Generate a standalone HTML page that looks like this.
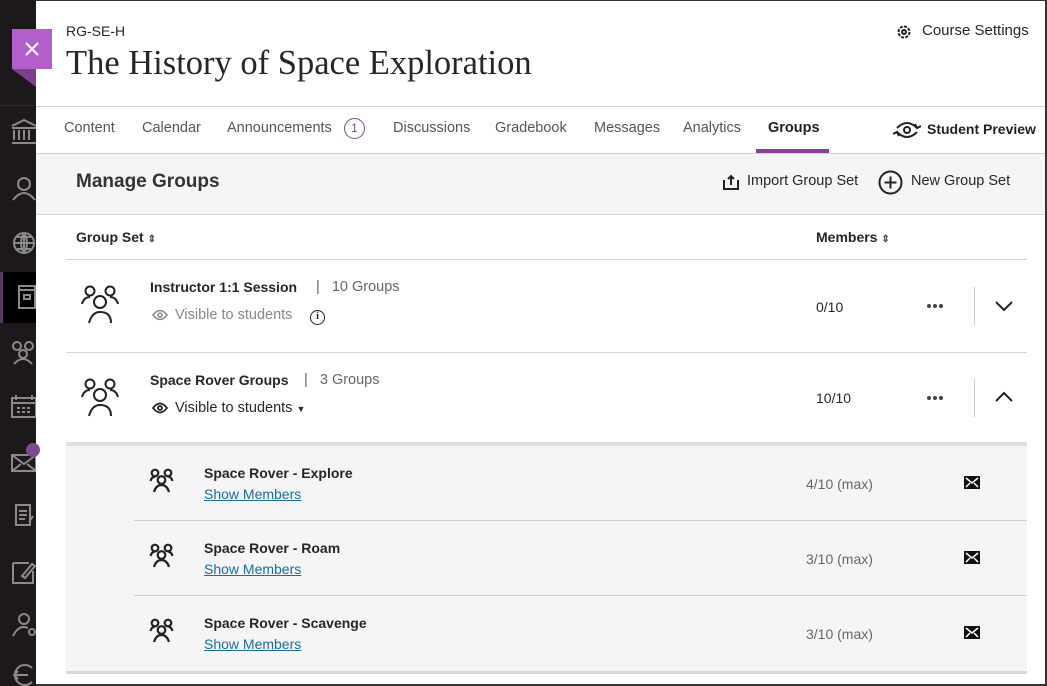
<!DOCTYPE html>
<html><head><meta charset="utf-8"><style>
*{box-sizing:border-box;margin:0;padding:0}
body{width:1047px;height:686px;overflow:hidden;position:relative;background:#fff;font-family:"Liberation Sans",sans-serif;color:#262626}
.a{position:absolute}
.side{left:0;top:0;width:36px;height:686px;background:#1c181c}
.t{font-size:14.5px;color:#555;top:120px}
.b{font-weight:bold}
.gray{color:#666}
.link{color:#1a6e99;text-decoration:underline;font-size:14px}
</style></head><body>
<div class="a side">
 <div class="a" style="left:0;top:105px;width:36px;height:1px;background:#2e2a2e"></div>
 <div class="a" style="left:0;top:272px;width:36px;height:51px;background:#000"></div>
 <div class="a" style="left:0;top:272px;width:3px;height:51px;background:#5b3468"></div>
 <svg class="a" style="left:0;top:0" width="36" height="686" fill="none" stroke="#8a8a8a" stroke-width="2">
  <path d="M12 126 L24 120 L36 126 M12 128h24 M14 130v10 M19 130v10 M24 130v10 M29 130v10 M12 143h24"/>
  <circle cx="24" cy="184" r="6"/><path d="M13 200 q11-14 22 0"/>
  <circle cx="24" cy="243" r="10"/><path d="M14 243h20 M24 233v20 M17 237h14 M17 249h14 M24 233q-6 10 0 20 M24 233q6 10 0 20"/>
  <rect x="19" y="286" width="16" height="22"/><path d="M19 290h16"/><rect x="24" y="295" width="6" height="4"/>
  <circle cx="17" cy="346" r="4"/><circle cx="29" cy="346" r="4"/><circle cx="23" cy="354" r="4"/><path d="M14 364q9-10 18 0"/>
  <rect x="12" y="398" width="24" height="19"/><path d="M12 403h24 M16 395v5 M32 395v5 M17 408h3 M22 408h3 M27 408h3 M17 412h3 M22 412h3 M27 412h3"/>
  <rect x="12" y="455" width="24" height="16"/><path d="M12 455l12 9 12-9 M12 471l9-7 M36 471l-9-7"/>
  <path d="M16 505h14v20h-14z M19 511h8 M19 515h8 M19 519h6 M29 522l4-6"/>
  <path d="M13 563h16 M13 563v20h20v-12 M22 576l10-12 3 2-10 12z"/>
  <circle cx="24" cy="619" r="5"/><path d="M13 636q6-12 15-8"/><circle cx="32" cy="632" r="3"/>
  <path d="M32 668a10 10 0 1 0 0 14 M14 675h14 M18 671l-4 4 4 4"/>
 </svg>
 <div class="a" style="left:26px;top:443px;width:14px;height:14px;border-radius:50%;background:#7c4a8f"></div>
</div>
<div class="a" style="left:12px;top:29px;width:40px;height:40px;background:#b35fcb"></div>
<svg class="a" style="left:12px;top:69px" width="24" height="18"><path d="M0 0h24v18z" fill="#7d3d91"/></svg>
<svg class="a" style="left:25px;top:42px" width="14" height="14" stroke="#fff" stroke-width="2"><path d="M1 1l12 12M13 1L1 13"/></svg>
<div class="a" style="right:0;top:0;width:2px;height:686px;background:#333"></div>
<div class="a" style="left:36px;top:0;width:1011px;height:1px;background:#333"></div>
<div class="a" style="left:36px;bottom:0;width:1011px;height:2px;background:#333"></div>

<div class="a" style="left:66px;top:23px;font-size:14px">RG-SE-H</div>
<div class="a" style="left:66px;top:44px;font-size:34.5px;font-family:'Liberation Serif',serif;color:#262626">The History of Space Exploration</div>
<svg class="a" style="left:896px;top:24px" width="16" height="16" fill="none" stroke="#222" stroke-width="2"><circle cx="8" cy="8" r="5.5" stroke-dasharray="3 1.3"/><circle cx="8" cy="8" r="2"/></svg>
<div class="a" style="left:922px;top:22px;font-size:15px">Course Settings</div>

<div class="a" style="left:36px;top:106px;width:1009px;height:1px;background:#cfcfcf"></div>
<div class="a t" style="left:64px">Content</div>
<div class="a t" style="left:142px">Calendar</div>
<div class="a t" style="left:227px">Announcements</div>
<div class="a" style="left:344px;top:118px;width:21px;height:21px;border:1.5px solid #7c4a8f;border-radius:50%;font-size:12px;color:#7c4a8f;text-align:center;line-height:18px">1</div>
<div class="a t" style="left:393px">Discussions</div>
<div class="a t" style="left:495px">Gradebook</div>
<div class="a t" style="left:594px">Messages</div>
<div class="a t" style="left:683px">Analytics</div>
<div class="a t" style="left:768px;color:#222;font-weight:bold">Groups</div>
<div class="a" style="left:756px;top:149px;width:73px;height:4px;background:#8a3fa0"></div>
<svg class="a" style="left:893px;top:120px" width="28" height="20" fill="none" stroke="#222" stroke-width="2"><circle cx="14" cy="10" r="3"/><path d="M4 8q10-10 20 0 M24 12q-10 10-20 0 M22 4l2 4 4-2 M6 16l-2-4-4 2"/></svg>
<div class="a" style="left:927px;top:121px;font-size:14px;font-weight:bold;color:#222">Student Preview</div>
<div class="a" style="left:36px;top:153px;width:1009px;height:1px;background:#cfcfcf"></div>

<div class="a" style="left:36px;top:154px;width:1009px;height:60px;background:#f5f5f6"></div>
<div class="a" style="left:76px;top:171px;font-size:19px;font-weight:bold;color:#333">Manage Groups</div>
<svg class="a" style="left:723px;top:174px" width="16" height="16" fill="none" stroke="#222" stroke-width="2"><path d="M1 6v9h14V6 M8 11V2 M5 5l3-3 3 3"/></svg>
<div class="a" style="left:747px;top:173px;font-size:14.5px">Import Group Set</div>
<svg class="a" style="left:878px;top:170px" width="25" height="25" fill="none" stroke="#222" stroke-width="2"><circle cx="12.5" cy="12.5" r="11"/><path d="M12.5 6.5v12M6.5 12.5h12"/></svg>
<div class="a" style="left:911px;top:173px;font-size:14.5px">New Group Set</div>
<div class="a" style="left:36px;top:214px;width:1009px;height:1px;background:#d5d5d5"></div>

<div class="a b" style="left:76px;top:229px;font-size:14px">Group Set <span style="font-size:10px;color:#444">&#8661;</span></div>
<div class="a b" style="left:816px;top:229px;font-size:14px">Members <span style="font-size:10px;color:#444">&#8661;</span></div>
<div class="a" style="left:66px;top:259px;width:961px;height:1px;background:#d5d5d5"></div>

<svg class="a" style="left:80px;top:283px" width="42" height="42" fill="none" stroke="#222" stroke-width="2"><circle cx="10" cy="8" r="4.5"/><circle cx="30" cy="8" r="4.5"/><circle cx="20" cy="19" r="6"/><path d="M2 21q2-7 8-7 M38 21q-2-7-8-7 M9 40q3-11 11-11 11 0 11 11"/></svg>
<div class="a b" style="left:150px;top:279px;font-size:14px">Instructor 1:1 Session</div>
<div class="a gray" style="left:316px;top:279px;font-size:14.5px">|&nbsp;&nbsp;&nbsp;10 Groups</div>
<svg class="a" style="left:152px;top:309px" width="16" height="12" fill="none" stroke="#888" stroke-width="1.6"><path d="M1 6q7-9 14 0q-7 9-14 0z"/><circle cx="8" cy="6" r="2"/></svg>
<div class="a" style="left:175px;top:307px;font-size:14.5px;color:#888">Visible to students</div>
<div class="a" style="left:310px;top:310px;width:15px;height:15px;border:1.6px solid #222;border-radius:50%;font-size:10px;text-align:center;line-height:12px;font-weight:bold;font-family:'Liberation Serif',serif">i</div>
<div class="a" style="left:816px;top:299px;font-size:14px">0/10</div>
<svg class="a" style="left:926px;top:303px" width="18" height="6" fill="#444"><circle cx="3" cy="3" r="2"/><circle cx="9" cy="3" r="2"/><circle cx="15" cy="3" r="2"/></svg>
<div class="a" style="left:974px;top:287px;width:1px;height:38px;background:#ccc"></div>
<svg class="a" style="left:995px;top:300px" width="18" height="12" fill="none" stroke="#222" stroke-width="2"><path d="M1 2l8 8 8-8"/></svg>
<div class="a" style="left:66px;top:352px;width:961px;height:1px;background:#d5d5d5"></div>

<svg class="a" style="left:80px;top:376px" width="42" height="42" fill="none" stroke="#222" stroke-width="2"><circle cx="10" cy="8" r="4.5"/><circle cx="30" cy="8" r="4.5"/><circle cx="20" cy="19" r="6"/><path d="M2 21q2-7 8-7 M38 21q-2-7-8-7 M9 40q3-11 11-11 11 0 11 11"/></svg>
<div class="a b" style="left:150px;top:372px;font-size:14px">Space Rover Groups</div>
<div class="a gray" style="left:304px;top:372px;font-size:14.5px">|&nbsp;&nbsp;&nbsp;3 Groups</div>
<svg class="a" style="left:152px;top:402px" width="16" height="12" fill="none" stroke="#222" stroke-width="1.8"><path d="M1 6q7-9 14 0q-7 9-14 0z"/><circle cx="8" cy="6" r="2"/></svg>
<div class="a" style="left:175px;top:400px;font-size:14.5px">Visible to students <span style="font-size:9px">&#9660;</span></div>
<div class="a" style="left:816px;top:390px;font-size:14px">10/10</div>
<svg class="a" style="left:926px;top:395px" width="18" height="6" fill="#444"><circle cx="3" cy="3" r="2"/><circle cx="9" cy="3" r="2"/><circle cx="15" cy="3" r="2"/></svg>
<div class="a" style="left:974px;top:379px;width:1px;height:38px;background:#ccc"></div>
<svg class="a" style="left:995px;top:391px" width="18" height="12" fill="none" stroke="#222" stroke-width="2"><path d="M1 10l8-8 8 8"/></svg>

<div class="a" style="left:66px;top:442px;width:961px;height:232px;background:#f5f4f7;border-top:4px solid #e0e0e2;border-bottom:3px solid #d8d8da"></div>
<div class="a" style="left:134px;top:520px;width:893px;height:1px;background:#cfcfcf"></div>
<div class="a" style="left:134px;top:595px;width:893px;height:1px;background:#cfcfcf"></div>

<svg class="a" style="left:149px;top:468px" width="26" height="26" fill="none" stroke="#222" stroke-width="2.2"><circle cx="6" cy="5" r="3.3"/><circle cx="19" cy="5" r="3.3"/><circle cx="12.5" cy="12" r="3.8"/><path d="M1.5 13q1-4 4.5-4.5 M23.5 13q-1-4-4.5-4.5 M5 24q2-7 7.5-7 5.5 0 7.5 7"/></svg>
<div class="a b" style="left:204px;top:465px;font-size:14px">Space Rover - Explore</div>
<div class="a link" style="left:204px;top:486px">Show Members</div>
<div class="a gray" style="left:806px;top:476px;font-size:14px">4/10 (max)</div>
<svg class="a" style="left:964px;top:476px" width="16" height="13"><rect x="0" y="0" width="16" height="13" fill="#111"/><path d="M2 2l6 5 6-5 M2 11l4-4 M14 11l-4-4" stroke="#fff" stroke-width="1.5" fill="none"/></svg>

<svg class="a" style="left:149px;top:543px" width="26" height="26" fill="none" stroke="#222" stroke-width="2.2"><circle cx="6" cy="5" r="3.3"/><circle cx="19" cy="5" r="3.3"/><circle cx="12.5" cy="12" r="3.8"/><path d="M1.5 13q1-4 4.5-4.5 M23.5 13q-1-4-4.5-4.5 M5 24q2-7 7.5-7 5.5 0 7.5 7"/></svg>
<div class="a b" style="left:204px;top:540px;font-size:14px">Space Rover - Roam</div>
<div class="a link" style="left:204px;top:561px">Show Members</div>
<div class="a gray" style="left:806px;top:551px;font-size:14px">3/10 (max)</div>
<svg class="a" style="left:964px;top:551px" width="16" height="13"><rect x="0" y="0" width="16" height="13" fill="#111"/><path d="M2 2l6 5 6-5 M2 11l4-4 M14 11l-4-4" stroke="#fff" stroke-width="1.5" fill="none"/></svg>

<svg class="a" style="left:149px;top:618px" width="26" height="26" fill="none" stroke="#222" stroke-width="2.2"><circle cx="6" cy="5" r="3.3"/><circle cx="19" cy="5" r="3.3"/><circle cx="12.5" cy="12" r="3.8"/><path d="M1.5 13q1-4 4.5-4.5 M23.5 13q-1-4-4.5-4.5 M5 24q2-7 7.5-7 5.5 0 7.5 7"/></svg>
<div class="a b" style="left:204px;top:615px;font-size:14px">Space Rover - Scavenge</div>
<div class="a link" style="left:204px;top:636px">Show Members</div>
<div class="a gray" style="left:806px;top:626px;font-size:14px">3/10 (max)</div>
<svg class="a" style="left:964px;top:626px" width="16" height="13"><rect x="0" y="0" width="16" height="13" fill="#111"/><path d="M2 2l6 5 6-5 M2 11l4-4 M14 11l-4-4" stroke="#fff" stroke-width="1.5" fill="none"/></svg>
</body></html>
